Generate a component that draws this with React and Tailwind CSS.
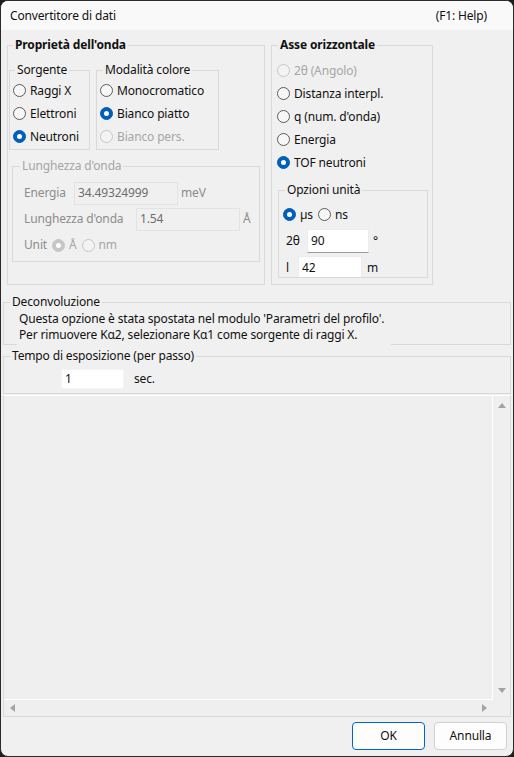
import React from 'react';

const font = { fontFamily: '"Noto Sans", "Open Sans", sans-serif' };

function Radio({ checked, disabled, label }) {
  let ring = 'border-[#5c5c5c] bg-[#f7f7f7]';
  if (checked) ring = disabled ? 'border-[#c6c6c6] bg-[#c6c6c6]' : 'border-[#005fb8] bg-[#005fb8]';
  else if (disabled) ring = 'border-[#c6c6c6] bg-[#f3f3f3]';
  return (
    <span className="flex items-center gap-[4px]">
      <span className={`w-[13px] h-[13px] shrink-0 rounded-full border flex items-center justify-center ${ring}`}>
        {checked && <span className="w-[5px] h-[5px] rounded-full bg-white" />}
      </span>
      <span className={disabled ? 'text-[#a6a6a6]' : ''}>{label}</span>
    </span>
  );
}

function Group({ title, bold, dim, className = '', legendClass = 'ml-[5px]', children }) {
  return (
    <fieldset className={`border border-[#d9d9d9] min-w-0 ${className}`}>
      <legend className={`px-[2px] h-[16px] leading-[16px] ${legendClass} ${bold ? 'font-bold' : ''} ${dim ? 'text-[#a6a6a6]' : ''}`}>
        {title}
      </legend>
      {children}
    </fieldset>
  );
}

function Field({ value, dim, className = '' }) {
  return (
    <div
      className={`h-[23px] px-[3px] flex items-center border ${
        dim ? 'bg-[#f0f0f0] border-[#e3e3e3] text-[#6e6e6e]' : 'bg-white border-[#ececec] border-b-[#9a9a9a]'
      } ${className}`}
    >
      {value}
    </div>
  );
}

function Arrow({ dir }) {
  const pts = {
    up: '0,5 4,0 8,5',
    down: '0,0 8,0 4,5',
    left: '5,0 5,8 0,4',
    right: '0,0 0,8 5,4',
  }[dir];
  const horiz = dir === 'left' || dir === 'right';
  return (
    <svg width={horiz ? 5 : 8} height={horiz ? 8 : 5} viewBox={horiz ? '0 0 5 8' : '0 0 8 5'}>
      <polygon points={pts} fill="#a3a3a3" />
    </svg>
  );
}

export default function App() {
  return (
    <div className="w-[514px] h-[757px] bg-[#1c1c1c]">
      <div
        className="w-[514px] h-[757px] flex flex-col rounded-[8px] border border-[#2a2a2a] overflow-hidden bg-[#f0f0f0] text-[12px] tracking-[-0.15px] text-[#111] whitespace-nowrap"
        style={font}
      >
        {/* title bar */}
        <div className="h-[29px] shrink-0 flex items-center justify-between pl-[9px] pr-[26px] bg-[#f9f9f9]">
          <span>Convertitore di dati</span>
          <span>(F1: Help)</span>
        </div>

        <div className="flex flex-col px-[2px]">
          <div className="flex gap-[6px] ml-[4px] mt-[7px]">
            {/* wave properties */}
            <Group title="Proprietà dell'onda" bold className="w-[258px] h-[248px]">
              <div className="flex gap-[6px] ml-[1px] mt-[9px]">
                <Group title="Sorgente" legendClass="ml-[5px]" className="w-[81px] h-[88px]">
                  <div className="pl-[3px] pt-[1px]">
                    <div className="h-[23px] flex items-center"><Radio label="Raggi X" /></div>
                    <div className="h-[23px] flex items-center"><Radio label="Elettroni" /></div>
                    <div className="h-[23px] flex items-center"><Radio label="Neutroni" checked /></div>
                  </div>
                </Group>
                <Group title="Modalità colore" legendClass="ml-[6px]" className="w-[123px] h-[88px]">
                  <div className="pl-[3px] pt-[1px]">
                    <div className="h-[23px] flex items-center"><Radio label="Monocromatico" /></div>
                    <div className="h-[23px] flex items-center"><Radio label="Bianco piatto" checked /></div>
                    <div className="h-[23px] flex items-center"><Radio label="Bianco pers." disabled /></div>
                  </div>
                </Group>
              </div>

              <Group title="Lunghezza d'onda" dim legendClass="ml-[7px]" className="w-[248px] h-[104px] ml-[4px] mt-[8px]">
                <div className="pl-[11px] pt-[6px] text-[#8c8c8c]">
                  <div className="h-[26px] flex items-center">
                    <span className="w-[50px]">Energia</span>
                    <Field dim value="34.49324999" className="w-[104px]" />
                    <span className="ml-[3px]">meV</span>
                  </div>
                  <div className="h-[26px] flex items-center">
                    <span className="w-[112px]">Lunghezza d'onda</span>
                    <Field dim value="1.54" className="w-[104px]" />
                    <span className="ml-[3px]">Å</span>
                  </div>
                  <div className="h-[26px] flex items-center gap-[5px]">
                    <span>Unit</span>
                    <Radio checked disabled label="Å" />
                    <Radio disabled label="nm" />
                  </div>
                </div>
              </Group>
            </Group>

            {/* horizontal axis */}
            <Group title="Asse orizzontale" bold legendClass="ml-[6px]" className="w-[162px] h-[248px]">
              <div className="pl-[5px] pt-[6px]">
                <div className="h-[23px] flex items-center"><Radio label="2θ (Angolo)" disabled /></div>
                <div className="h-[23px] flex items-center"><Radio label="Distanza interpl." /></div>
                <div className="h-[23px] flex items-center"><Radio label="q (num. d'onda)" /></div>
                <div className="h-[23px] flex items-center"><Radio label="Energia" /></div>
                <div className="h-[23px] flex items-center"><Radio label="TOF neutroni" checked /></div>
              </div>
              <Group title="Opzioni unità" legendClass="ml-[6px]" className="w-[150px] h-[96px] ml-[6px] mt-[8px] overflow-hidden">
                <div className="pl-[4px] pt-[4px]">
                  <div className="h-[25px] flex items-center gap-[5px]">
                    <Radio label="µs" checked />
                    <Radio label="ns" />
                  </div>
                  <div className="h-[27px] flex items-center pl-[3px]">
                    <span className="w-[21px]">2θ</span>
                    <Field value="90" className="w-[62px] h-[24px]" />
                    <span className="ml-[4px]">°</span>
                  </div>
                  <div className="h-[26px] flex items-start pt-[2px] pl-[3px]">
                    <span className="w-[12px] leading-[24px]">l</span>
                    <Field value="42" className="w-[64px] border-b-transparent" />
                    <span className="ml-[5px] leading-[24px]">m</span>
                  </div>
                </div>
              </Group>
            </Group>
          </div>

          {/* deconvolution note */}
          <Group title="Deconvoluzione" legendClass="ml-[6px]" className="h-[51px] mt-[9px]">
            <div className="relative w-[374px] h-[35px] ml-[13px] mt-[1px] pl-[2px] bg-[#f0f0f0] leading-[16px]">
              <div>Questa opzione è stata spostata nel modulo 'Parametri del profilo'.</div>
              <div>Per rimuovere Kα2, selezionare Kα1 come sorgente di raggi X.</div>
            </div>
          </Group>

          {/* exposure time */}
          <Group title="Tempo di esposizione (per passo)" legendClass="ml-[6px]" className="h-[46px] mt-[3px]">
            <div className="flex items-center mt-[5px] ml-[57px]">
              <div className="w-[63px] h-[20px] px-[3px] flex items-center bg-white border border-[#f4f4f4]">1</div>
              <span className="ml-[10px]">sec.</span>
            </div>
          </Group>

          {/* scroll panel */}
          <div className="h-[322px] mt-[1px] flex flex-col border border-[#dadada] border-t-white bg-[#efefef]">
            <div className="flex flex-1">
              <div className="flex-1 border-r border-b border-white" />
              <div className="w-[17px] flex flex-col items-center justify-between pt-[7px] pb-[7px]">
                <Arrow dir="up" />
                <Arrow dir="down" />
              </div>
            </div>
            <div className="h-[16px] flex">
              <div className="w-[489px] flex items-center justify-between px-[6px]">
                <Arrow dir="left" />
                <Arrow dir="right" />
              </div>
            </div>
          </div>

          {/* dialog buttons */}
          <div className="flex justify-end gap-[9px] mt-[5px] pr-[4px]">
            <button className="w-[73px] h-[28px] rounded-[4px] border border-[#0067c0] bg-[#fdfdfd]">OK</button>
            <button className="w-[73px] h-[28px] rounded-[4px] border border-[#d0d0d0] bg-[#fdfdfd]">Annulla</button>
          </div>
        </div>
      </div>
    </div>
  );
}
